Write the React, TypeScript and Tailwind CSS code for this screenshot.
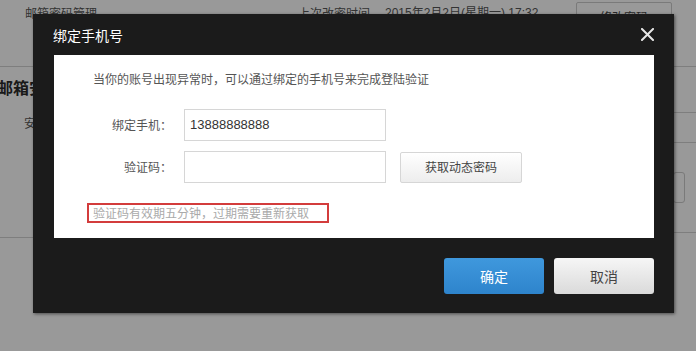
import React from "react";

const cjk = "font-['Microsoft_YaHei','Noto_Sans_CJK_SC',sans-serif]";

function Field({ label, value, children }: { label: string; value?: string; children?: React.ReactNode }) {
  return (
    <div className="flex items-center">
      <span className="w-[118px] text-right text-[12px] leading-[18px] text-[#555]">{label}</span>
      <div className="ml-[12px] flex h-[32px] w-[202px] items-center border border-[#d6d6d6] bg-white px-[5px] text-[13px] text-[#333] font-['Liberation_Sans',sans-serif]">
        {value}
      </div>
      {children}
    </div>
  );
}

export default function App() {
  return (
    <div className={`relative h-[351px] w-[696px] overflow-hidden bg-white ${cjk}`}>
      {/* page behind the dialog */}
      <div className="flex h-[67px] items-start border-b border-[#d3d3d3] pt-[4px] text-[12px] leading-[18px] text-[#555]">
        <span className="ml-[25px] w-[273px]">邮箱密码管理</span>
        <span className="w-[87px]">上次改密时间</span>
        <span className="w-[191px] font-['Liberation_Sans','Noto_Sans_CJK_SC',sans-serif]">2015年2月2日(星期一) 17:32</span>
        <div className="-mt-[2px] flex h-[30px] w-[96px] items-center justify-center rounded-[2px] border border-[#ccc] text-[#444]">
          修改密码
        </div>
      </div>
      <div className="flex">
        <div className="flex h-[171px] flex-1 flex-col border-b border-[#d3d3d3]">
          <h2 className="-ml-[3px] mt-[10px] text-[16px] font-bold leading-[20px] text-[#2a2a2a]">邮箱安全设置</h2>
          <p className="ml-[24px] mt-[17px] text-[12px] leading-[18px] text-[#555]">安全等级</p>
        </div>
        <div className="flex w-[130px] flex-col">
          <div className="h-[46px] border-b border-[#d3d3d3]" />
          <div className="h-[30px] border-b border-[#d3d3d3]" />
          <div className="mt-[29px] ml-[107px] h-[31px] w-[12px] rounded-[3px] border border-[#ccc]" />
          <div className="h-[30px] border-b border-[#d3d3d3]" />
        </div>
      </div>

      {/* overlay */}
      <div className="absolute inset-0 bg-black/40" />

      {/* dialog */}
      <div className="absolute left-[33px] top-[14px] flex h-[299px] w-[641px] flex-col bg-[#1b1b1b] shadow-[1px_1px_3px_rgba(0,0,0,0.5)]">
        <div className="flex h-[41px] items-center justify-between pl-[20px] pr-[20px]">
          <span className="text-[14px] leading-[20px] text-white">绑定手机号</span>
          <svg width="13" height="13" viewBox="0 0 13 13" className="mt-[-1px]">
            <path d="M1 1L12 12M12 1L1 12" stroke="#e6e6e6" strokeWidth="2" strokeLinecap="square" />
          </svg>
        </div>

        <div className="ml-[21px] flex h-[183px] w-[600px] flex-col bg-white pt-[15px]">
          <p className="ml-[39px] text-[12px] leading-[18px] text-[#555]">
            当你的账号出现异常时，可以通过绑定的手机号来完成登陆验证
          </p>
          <div className="mt-[21px] flex flex-col gap-[10px]">
            <Field label="绑定手机：" value="13888888888" />
            <Field label="验证码：">
              <button className="ml-[14px] h-[31px] w-[122px] rounded-[2px] border border-[#d6d6d6] bg-gradient-to-b from-white to-[#ededed] text-[12px] text-[#444]">
                获取动态密码
              </button>
            </Field>
          </div>
          <div className="ml-[33px] mt-[20px] flex h-[20px] w-[242px] items-center border-2 border-[#d33c3c] pl-[4px] text-[12px] leading-[16px] text-[#aaa]">
            验证码有效期五分钟，过期需要重新获取
          </div>
        </div>

        <div className="flex justify-end gap-[10px] pr-[20px] pt-[20px]">
          <button className="h-[36px] w-[100px] rounded-[3px] bg-gradient-to-b from-[#3f98dd] to-[#2e84cc] text-[14px] text-white">
            确定
          </button>
          <button className="h-[36px] w-[100px] rounded-[3px] bg-gradient-to-b from-[#f6f6f6] to-[#dadada] text-[14px] text-[#444]">
            取消
          </button>
        </div>
      </div>
    </div>
  );
}
